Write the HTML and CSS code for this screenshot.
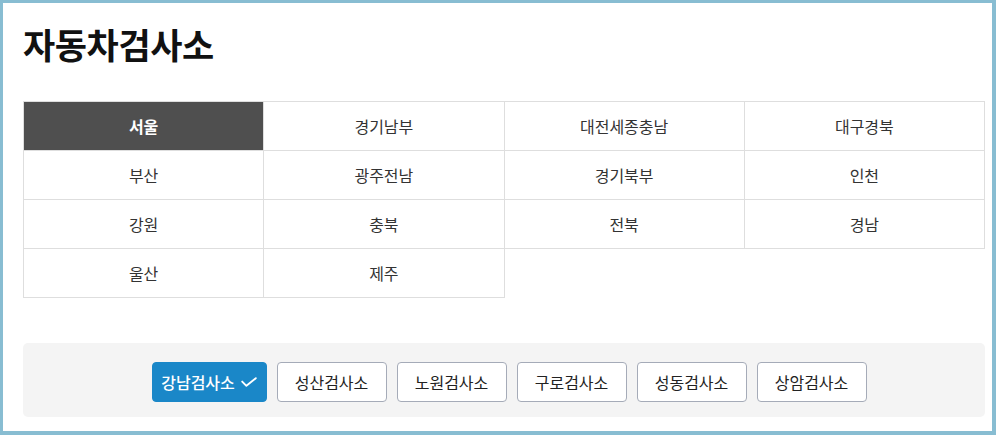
FILE: index.html
```html
<!DOCTYPE html>
<html lang="ko">
<head>
<meta charset="utf-8">
<link rel="stylesheet" href="styles.css">
</head>
<body>
<div class="frame">
  <h1 class="title">자동차검사소</h1>
  <div class="regions">
    <div class="cell active">서울</div>
    <div class="cell">경기남부</div>
    <div class="cell">대전세종충남</div>
    <div class="cell">대구경북</div>
    <div class="cell">부산</div>
    <div class="cell">광주전남</div>
    <div class="cell">경기북부</div>
    <div class="cell">인천</div>
    <div class="cell">강원</div>
    <div class="cell">충북</div>
    <div class="cell">전북</div>
    <div class="cell">경남</div>
    <div class="cell">울산</div>
    <div class="cell">제주</div>
  </div>
  <div class="panel">
    <button class="btn on">강남검사소<svg class="chk" viewBox="0 0 16 10" width="16" height="10"><path d="M1.2 4.6 L5.4 8.8 L14.8 1.2" fill="none" stroke="#fff" stroke-width="1.9" stroke-linecap="round" stroke-linejoin="round"/></svg></button>
    <button class="btn">성산검사소</button>
    <button class="btn">노원검사소</button>
    <button class="btn">구로검사소</button>
    <button class="btn">성동검사소</button>
    <button class="btn">상암검사소</button>
  </div>
</div>
</body>
</html>
```
FILE: styles.css
```css
html, body {
  margin: 0;
  padding: 0;
}
body {
  font-family: "Noto Sans CJK KR", "Noto Sans", sans-serif;
  color: #333;
}
.frame {
  box-sizing: border-box;
  width: 996px;
  height: 435px;
  border: 3px solid #88bdd2;
  border-right-width: 4px;
  border-bottom-width: 4px;
  padding: 0 8px 0 20px;
  background: #fff;
}
.title {
  margin: 0;
  padding-top: 17px;
  height: 98px;
  box-sizing: border-box;
  font-size: 35px;
  line-height: 48px;
  font-weight: 700;
  color: #111;
  letter-spacing: -0.4px;
}
.regions {
  display: grid;
  grid-template-columns: repeat(4, 1fr);
  width: 962px;
  border-top: 1px solid #dedede;
  border-left: 1px solid #dedede;
  box-sizing: border-box;
}
.cell {
  height: 49px;
  box-sizing: border-box;
  border-right: 1px solid #dedede;
  border-bottom: 1px solid #dedede;
  display: flex;
  align-items: center;
  justify-content: center;
  font-size: 16px;
  color: #333;
}
.cell.active {
  background: #4f4f4f;
  color: #fff;
  font-weight: 700;
}
.panel {
  margin-top: 45px;
  width: 962px;
  height: 74px;
  box-sizing: border-box;
  padding: 4px 0 0 10px;
  background: #f4f4f4;
  border-radius: 5px;
  display: flex;
  align-items: center;
  justify-content: center;
  gap: 10px;
}
.btn {
  font-family: inherit;
  width: 110px;
  height: 40px;
  box-sizing: border-box;
  border: 1px solid #a5abb8;
  border-radius: 4px;
  background: #fff;
  font-size: 16px;
  color: #222;
  display: flex;
  align-items: center;
  justify-content: center;
  padding: 0;
}
.btn.on {
  width: 115px;
  background: #1a87c8;
  border-color: #1a87c8;
  color: #fff;
  font-weight: 500;
}
.chk {
  margin-left: 6px;
}
```
